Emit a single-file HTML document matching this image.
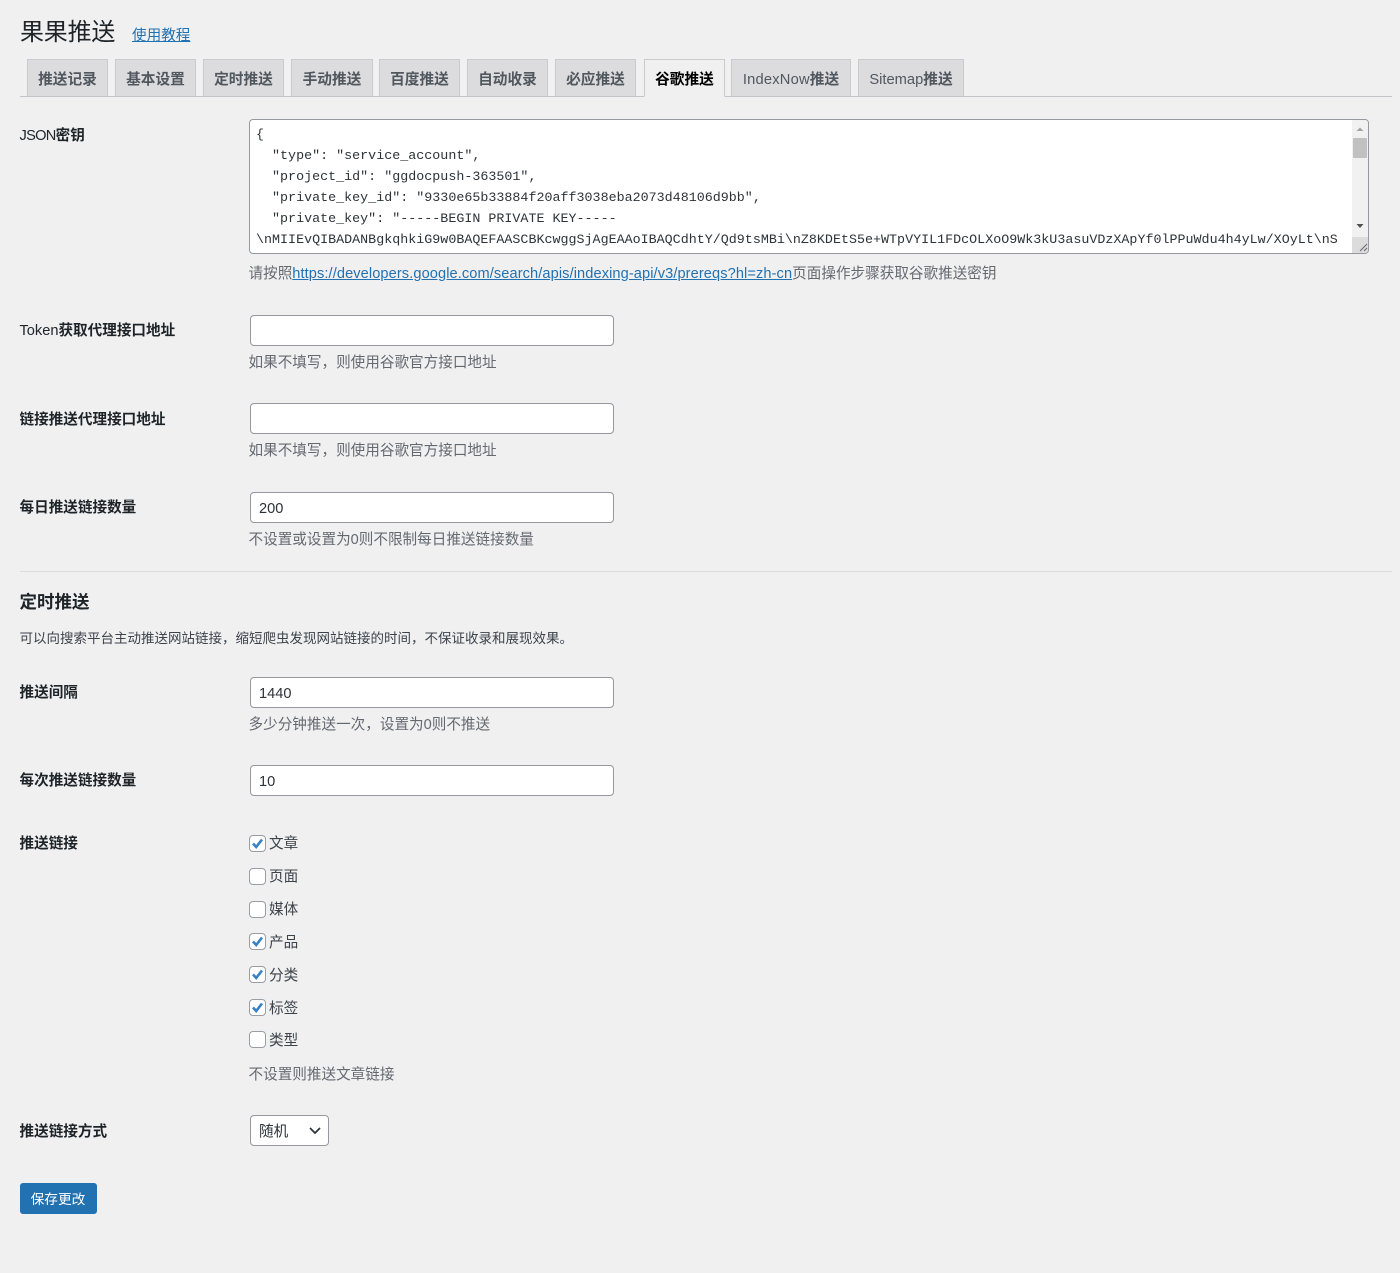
<!DOCTYPE html>
<html lang="zh"><head><meta charset="utf-8"><title>果果推送</title>
<style>
html,body{margin:0;padding:0;background:#f0f0f1}
body{position:relative;width:1400px;height:1273px;overflow:hidden;font-family:"Liberation Sans","Noto Sans CJK SC",sans-serif;font-size:14.6px;color:#3c434a}
.a{position:absolute;white-space:nowrap}
.tab{position:absolute;top:59px;height:36px;background:#dcdcde;border:1px solid #c9cacc;border-bottom:1px solid #c3c4c7;line-height:41px;text-align:center;font-weight:700;color:#50575e;font-size:14.7px;white-space:nowrap}
.tab i,.lb i{font-style:normal;font-weight:400}
.tab.on{background:#f0f0f1;border-bottom:1px solid #f0f0f1;color:#000}
.lb{position:absolute;left:19.5px;font-weight:700;color:#1d2327;line-height:20px;white-space:nowrap;font-size:14.6px}
.d{position:absolute;left:248.5px;color:#646970;line-height:20px;white-space:nowrap;font-size:14.6px}
.in{position:absolute;left:250px;width:364px;box-sizing:border-box;height:31px;background:#fff;border:1px solid #95989c;border-radius:4px;padding-left:8px;line-height:33px;color:#2c3338;font-size:14.6px}
.cb{position:absolute;left:249px;width:17px;height:17px;box-sizing:border-box;background:#fff;border:1px solid #9a9da1;border-radius:4px}
.cb svg{position:absolute;left:0;top:0}
.cl{position:absolute;left:269px;font-size:14.6px;line-height:20px;color:#3c434a}
</style></head><body>
<div class="a" style="left:20px;top:15px;font-size:24px;line-height:36px;color:#1d2327;letter-spacing:-.2px">果果推送</div>
<a class="a" style="left:132px;top:26px;font-size:14.6px;line-height:20px;color:#2271b1;text-decoration:underline">使用教程</a>

<div class="a" style="left:20px;top:96px;width:1372px;height:1px;background:#c3c4c7"></div>
<div class="tab" style="left:27px;width:79px">推送记录</div>
<div class="tab" style="left:115px;width:79px">基本设置</div>
<div class="tab" style="left:203px;width:79px">定时推送</div>
<div class="tab" style="left:291px;width:80px">手动推送</div>
<div class="tab" style="left:379px;width:79px">百度推送</div>
<div class="tab" style="left:467px;width:79px">自动收录</div>
<div class="tab" style="left:555px;width:79px">必应推送</div>
<div class="tab on" style="left:644px;width:79px">谷歌推送</div>
<div class="tab" style="left:731px;width:118px"><i style="letter-spacing:.2px">IndexNow</i>推送</div>
<div class="tab" style="left:858px;width:104px"><i>Sitemap</i>推送</div>

<div class="lb" style="top:126px"><i style="letter-spacing:-.7px">JSON</i>密钥</div>
<div class="a" style="left:249px;top:119px;width:1120px;height:135px;box-sizing:border-box;background:#fff;border:1px solid #95989c;border-radius:4px;overflow:hidden">
<pre style="margin:0;position:absolute;left:6px;top:5px;font-family:'Liberation Mono',monospace;font-size:13.33px;letter-spacing:.015px;line-height:21px;color:#2c3338">{
  "type": "service_account",
  "project_id": "ggdocpush-363501",
  "private_key_id": "9330e65b33884f20aff3038eba2073d48106d9bb",
  "private_key": "-----BEGIN PRIVATE KEY-----
\nMIIEvQIBADANBgkqhkiG9w0BAQEFAASCBKcwggSjAgEAAoIBAQCdhtY/Qd9tsMBi\nZ8KDEtS5e+WTpVYIL1FDcOLXoO9Wk3kU3asuVDzXApYf0lPPuWdu4h4yLw/XOyLt\nS</pre>
<div style="position:absolute;left:1102px;top:0;width:16px;height:133px;background:#f1f1f1"></div>
<div style="position:absolute;left:1103px;top:18px;width:14px;height:20px;background:#c1c1c1"></div>
<div style="position:absolute;left:1102px;top:117px;width:16px;height:16px;background:#dcdcdc"></div>
<svg style="position:absolute;left:1102px;top:0" width="16" height="133"><path d="M4.500 11L8 7.500L11.500 11Z" fill="#a3a3a3"/><path d="M4.500 104L8 108L11.500 104Z" fill="#505050"/><path d="M8 131L15 124M12 131L15 128" stroke="#666" stroke-width="1" fill="none"/></svg>
</div>
<div class="d" style="top:264px">请按照<span style="color:#2271b1;text-decoration:underline;letter-spacing:.095px">https://developers.google.com/search/apis/indexing-api/v3/prereqs?hl=zh-cn</span>页面操作步骤获取谷歌推送密钥</div>

<div class="lb" style="top:321px"><i>Token</i>获取代理接口地址</div>
<div class="in" style="top:315px"></div>
<div class="d" style="top:353px">如果不填写，则使用谷歌官方接口地址</div>

<div class="lb" style="top:410px">链接推送代理接口地址</div>
<div class="in" style="top:403px"></div>
<div class="d" style="top:441px">如果不填写，则使用谷歌官方接口地址</div>

<div class="lb" style="top:498px">每日推送链接数量</div>
<div class="in" style="top:492px">200</div>
<div class="d" style="top:530px">不设置或设置为0则不限制每日推送链接数量</div>

<div class="a" style="left:20px;top:571px;width:1372px;height:1px;background:#dcdcde"></div>
<div class="a" style="left:19.5px;top:590px;font-size:17.5px;font-weight:700;line-height:24px;color:#1d2327">定时推送</div>
<div class="a" style="left:19.5px;top:629px;font-size:13.5px;line-height:20px;color:#3c434a">可以向搜索平台主动推送网站链接，缩短爬虫发现网站链接的时间，不保证收录和展现效果。</div>

<div class="lb" style="top:683px">推送间隔</div>
<div class="in" style="top:677px">1440</div>
<div class="d" style="top:715px">多少分钟推送一次，设置为0则不推送</div>

<div class="lb" style="top:771px">每次推送链接数量</div>
<div class="in" style="top:765px">10</div>

<div class="lb" style="top:834px">推送链接</div>
<div class="cb" style="top:835px"><svg width="15" height="15" viewBox="0 0 15 15"><path d="M3 7.500L6.200 11L12 3.500" fill="none" stroke="#3582c4" stroke-width="2.600"/></svg></div><div class="cl" style="top:834px">文章</div>
<div class="cb" style="top:868px"></div><div class="cl" style="top:867px">页面</div>
<div class="cb" style="top:901px"></div><div class="cl" style="top:900px">媒体</div>
<div class="cb" style="top:933px"><svg width="15" height="15" viewBox="0 0 15 15"><path d="M3 7.500L6.200 11L12 3.500" fill="none" stroke="#3582c4" stroke-width="2.600"/></svg></div><div class="cl" style="top:933px">产品</div>
<div class="cb" style="top:966px"><svg width="15" height="15" viewBox="0 0 15 15"><path d="M3 7.500L6.200 11L12 3.500" fill="none" stroke="#3582c4" stroke-width="2.600"/></svg></div><div class="cl" style="top:966px">分类</div>
<div class="cb" style="top:999px"><svg width="15" height="15" viewBox="0 0 15 15"><path d="M3 7.500L6.200 11L12 3.500" fill="none" stroke="#3582c4" stroke-width="2.600"/></svg></div><div class="cl" style="top:999px">标签</div>
<div class="cb" style="top:1031px"></div><div class="cl" style="top:1031px">类型</div>
<div class="d" style="top:1065px">不设置则推送文章链接</div>

<div class="lb" style="top:1122px">推送链接方式</div>
<div class="in" style="top:1115px;width:79px">随机<svg style="position:absolute;left:57px;top:10px" width="14" height="10"><path d="M2 2L7 7L12 2" fill="none" stroke="#2c3338" stroke-width="1.700"/></svg></div>

<div class="a" style="left:20px;top:1183px;width:77px;height:31px;box-sizing:border-box;background:#2271b1;border:1px solid #2271b1;border-radius:3px;color:#fff;font-size:13.7px;line-height:31px;text-align:center;text-indent:-1px">保存更改</div>
</body></html>
